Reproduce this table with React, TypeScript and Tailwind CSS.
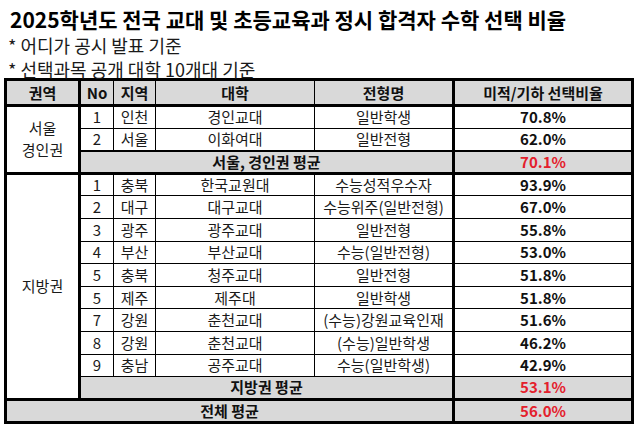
import React from "react";

const font = { fontFamily: '"Noto Sans CJK KR", "Noto Sans", sans-serif' };

type Row = { no: string; region: string; uni: string; type: string; ratio: string };

const seoul: Row[] = [
  { no: "1", region: "인천", uni: "경인교대", type: "일반학생", ratio: "70.8%" },
  { no: "2", region: "서울", uni: "이화여대", type: "일반전형", ratio: "62.0%" },
];

const local: Row[] = [
  { no: "1", region: "충북", uni: "한국교원대", type: "수능성적우수자", ratio: "93.9%" },
  { no: "2", region: "대구", uni: "대구교대", type: "수능위주(일반전형)", ratio: "67.0%" },
  { no: "3", region: "광주", uni: "광주교대", type: "일반전형", ratio: "55.8%" },
  { no: "4", region: "부산", uni: "부산교대", type: "수능(일반전형)", ratio: "53.0%" },
  { no: "5", region: "충북", uni: "청주교대", type: "일반전형", ratio: "51.8%" },
  { no: "5", region: "제주", uni: "제주대", type: "일반학생", ratio: "51.8%" },
  { no: "7", region: "강원", uni: "춘천교대", type: "(수능)강원교육인재", ratio: "51.6%" },
  { no: "8", region: "강원", uni: "춘천교대", type: "(수능)일반학생", ratio: "46.2%" },
  { no: "9", region: "충남", uni: "공주교대", type: "수능(일반학생)", ratio: "42.9%" },
];

function DataRow({ r, first, label, span, topThick }: { r: Row; first?: boolean; label?: React.ReactNode; span?: number; topThick?: boolean }) {
  const t = topThick ? "border-t-[3px]" : "";
  return (
    <tr className="h-[22.6px]">
      {first && (
        <td rowSpan={span} className={`border border-black border-r-[3px] ${t} text-center align-middle leading-[22px]`}>
          {label}
        </td>
      )}
      <td className={`border border-black ${t} text-center`}>{r.no}</td>
      <td className={`border border-black ${t} text-center`}>{r.region}</td>
      <td className={`border border-black ${t} text-center`}>{r.uni}</td>
      <td className={`border border-black border-r-[3px] ${t} text-center`}>{r.type}</td>
      <td className={`border border-black ${t} text-center font-bold text-[#111]`}>{r.ratio}</td>
    </tr>
  );
}

export default function App() {
  return (
    <div className="w-[640px] h-[438px] bg-white text-[#1a1a1a] overflow-hidden" style={font}>
      <div className="pl-[10px] pt-[5px] text-[21px] font-bold leading-[28px] text-black">
        2025학년도 전국 교대 및 초등교육과 정시 합격자 수학 선택 비율
      </div>
      <div className="pl-[8px] text-[18px] leading-[24px]">* 어디가 공시 발표 기준</div>
      <div className="pl-[8px] text-[18px] leading-[24px]">* 선택과목 공개 대학 10개대 기준</div>
      <table className="ml-[4px] -mt-[3px] w-[627px] table-fixed border-collapse border-[3px] border-black text-[15px] leading-[20px]">
        <colgroup>
          <col className="w-[74px]" />
          <col className="w-[34px]" />
          <col className="w-[42px]" />
          <col className="w-[159px]" />
          <col className="w-[139px]" />
          <col className="w-[179px]" />
        </colgroup>
        <thead>
          <tr className="h-[26px] bg-[#d9d9d9] font-bold text-[15px] text-[#111]">
            <th className="border border-black border-r-[3px] border-b-[3px] font-bold">권역</th>
            <th className="border border-black border-b-[3px] font-bold">No</th>
            <th className="border border-black border-b-[3px] font-bold">지역</th>
            <th className="border border-black border-b-[3px] font-bold">대학</th>
            <th className="border border-black border-r-[3px] border-b-[3px] font-bold">전형명</th>
            <th className="border border-black border-b-[3px] font-bold">미적/기하 선택비율</th>
          </tr>
        </thead>
        <tbody>
          {seoul.map((r, i) => (
            <DataRow
              key={i}
              r={r}
              first={i === 0}
              span={3}
              label={
                <>
                  서울
                  <br />
                  경인권
                </>
              }
            />
          ))}
          <tr className="h-[22.6px] bg-[#d9d9d9] font-bold text-[#111]">
            <td colSpan={4} className="border border-black border-t-[2px] border-r-[3px] text-center">서울, 경인권 평균</td>
            <td className="border border-black border-t-[2px] text-center text-[#e4202c]">70.1%</td>
          </tr>
          {local.map((r, i) => (
            <DataRow key={i} r={r} first={i === 0} span={10} label="지방권" topThick={i === 0} />
          ))}
          <tr className="h-[22.6px] bg-[#d9d9d9] font-bold text-[#111]">
            <td colSpan={4} className="border border-black border-r-[3px] text-center">지방권 평균</td>
            <td className="border border-black text-center text-[#e4202c]">53.1%</td>
          </tr>
          <tr className="h-[22.6px] bg-[#d9d9d9] font-bold text-[#111]">
            <td colSpan={5} className="border border-black border-t-[3px] border-r-[3px] text-center">전체 평균</td>
            <td className="border border-black border-t-[3px] text-center text-[#e4202c]">56.0%</td>
          </tr>
        </tbody>
      </table>
    </div>
  );
}
